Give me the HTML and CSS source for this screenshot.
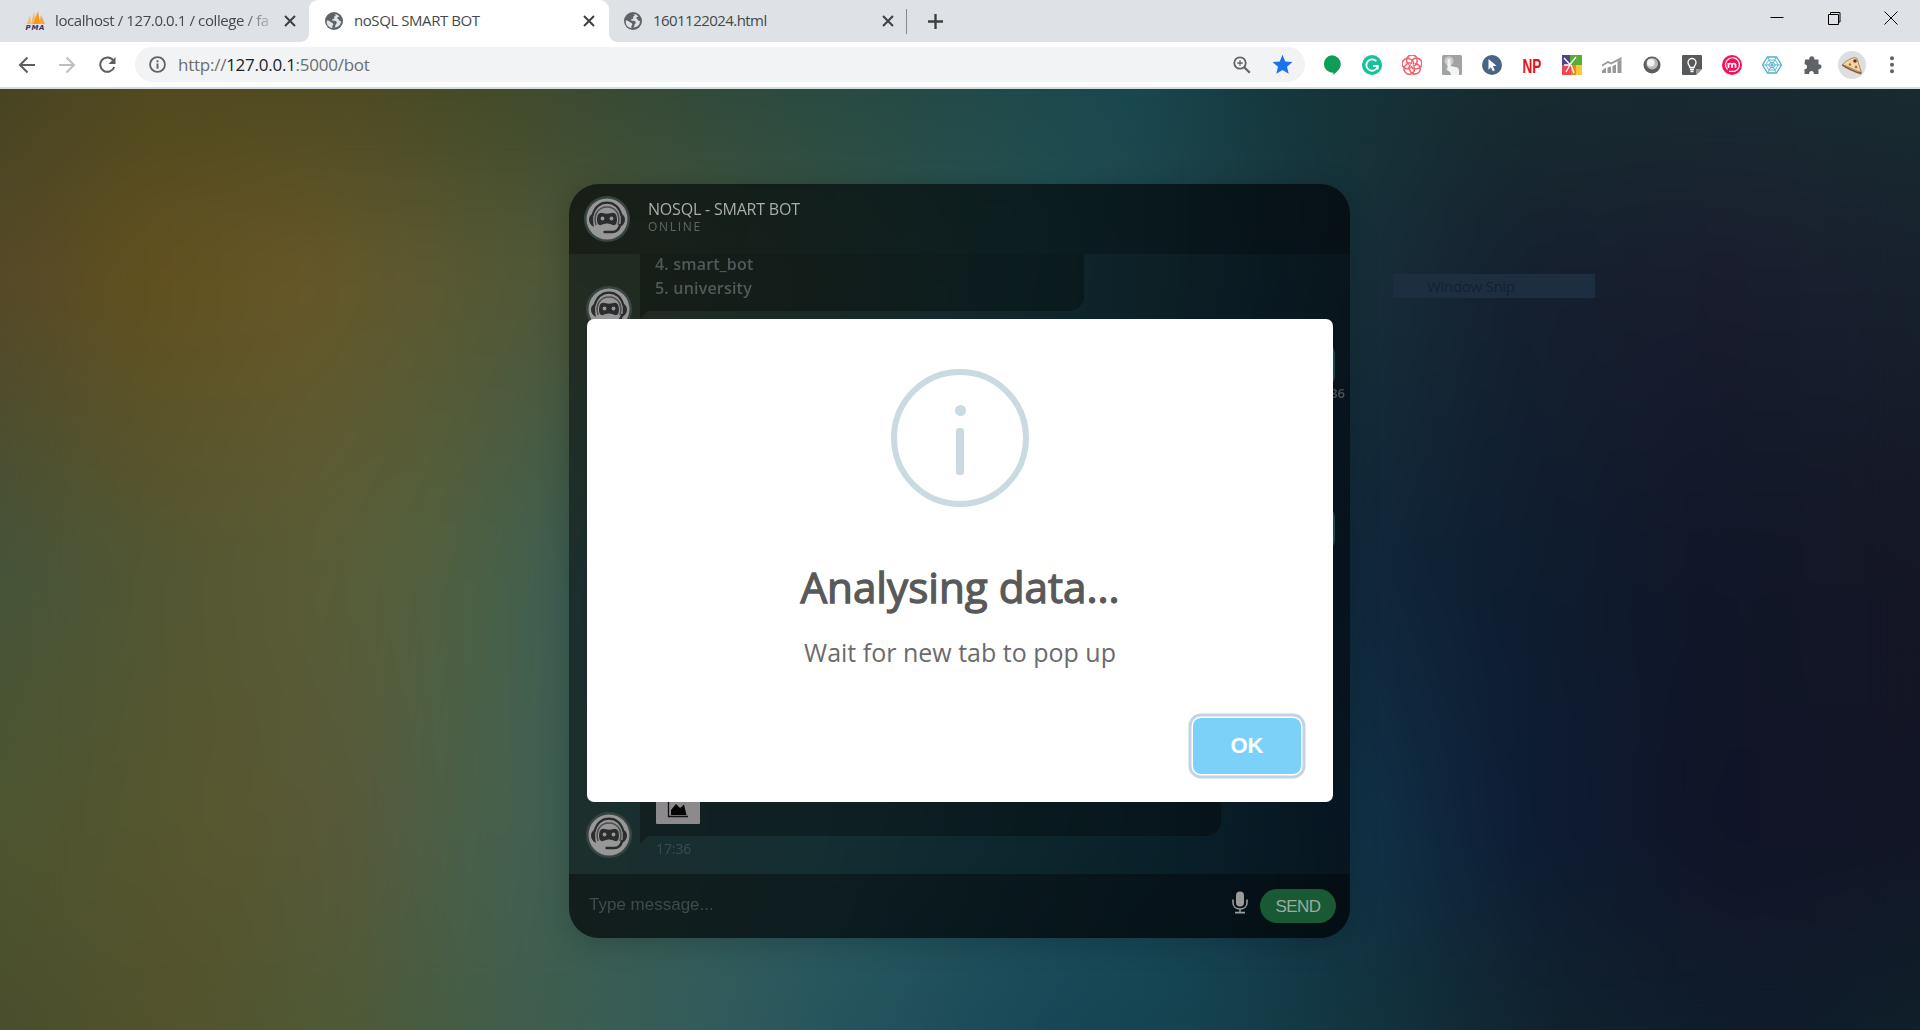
FILE: index.html
```
<!DOCTYPE html>
<html lang="en">
<head>
<meta charset="utf-8">
<title>noSQL SMART BOT</title>
<link rel="stylesheet" href="styles.css">
</head>
<body>
<svg class="defs" aria-hidden="true">
  <symbol id="globe" viewBox="0 0 24 24"><circle cx="12" cy="12" r="12" fill="#5f6368"/><path d="M12 2.2c2 1 2.800 1.500 2.200 2.600-.4.800-1.700.7-1.900 1.700-.2.900.5 1.300 0 2.200-.6 1-2.500.5-2.900 1.500-.3.900 1 1.400 2.500 1.400 2.400 0 3.700.7 3.800 2.400.1 1.500-1.300 1.900-1.700 3.100-.4 1.300-.2 2.600-1.500 3.600a10 10 0 0 0 9.100-8.800c-1.500.5-2.600-.4-3.200-1.700-.6-1.200-2.100-.7-2.100-2.100 0-1.300 1.900-1.500 2.900-2.400A10 10 0 0 0 12 2.200zM2.200 11.500c2.500-.3 3.700.8 5.200 1.700 1.600 1 3.700 1.200 3.700 3 0 1.600-1.500 2-1.400 3.500l.1 1.800A9.900 9.900 0 0 1 2.200 11.500z" fill="#dfe2e7"/></symbol>
  <symbol id="cross" viewBox="0 0 12 12"><path d="M1 1l10 10M11 1L1 11" stroke="#3c4043" stroke-width="2"/></symbol>
  <symbol id="bot" viewBox="0 0 46 46">
    <circle cx="23" cy="23" r="23" fill="#374542"/><circle cx="23" cy="23" r="20.500" fill="#979797"/>
    <path d="M8.500 19.500C11 11 16 6.700 23 6.700S35 11 37.500 19.500" fill="none" stroke="#2b2c2e" stroke-width="2.200"/>
    <path d="M9.500 17.500c-3 1-4.500 3-4.500 6s1.500 6 5 7.500c-1-4-1-9-.5-13.500zM36.500 17.500c3 1 4.500 3 4.500 6s-1.500 6-5 7.500c1-4 1-9 .5-13.500z" fill="#2b2c2e"/>
    <path d="M12 29c-3-10 2-18 11-18s14 8 11 18" fill="none" stroke="#4c4d4e" stroke-width="1.500"/>
    <path d="M15 17.500c2.500-1.600 4.500.2 8 .2s5.500-1.800 8-.2c2.500 1.700 2.700 10 .2 11.300-2.500 1.200-4.200-1.300-8.200-1.300s-5.700 2.500-8.200 1.300c-2.500-1.300-2.300-9.600.2-11.300z" fill="#2b2c2e"/>
    <circle cx="18.500" cy="22.500" r="1.900" fill="#979797"/><circle cx="27.500" cy="22.500" r="1.900" fill="#979797"/>
    <path d="M36 29c-1 5-4 7-8 7h-7.500" fill="none" stroke="#2b2c2e" stroke-width="2.400" stroke-linecap="round"/>
  </symbol>
</svg>

<header class="tabs">
  <div class="tab tab-first">
    <svg class="pma" viewBox="0 0 20 20"><path d="M2 13L5 4l1 9zM6 13L9 1l2 12z" fill="#f5b96a"/><path d="M8 13L13 0l2 13z" fill="#f7981d"/><path d="M14 13l2-9 4 9z" fill="#fba63c"/><text x="10" y="19" text-anchor="middle" textLength="19" class="pma-text">PMA</text></svg>
    <span class="tab-title t1">localhost / 127.0.0.1 / college / fa</span>
    <svg class="x"><use href="#cross"/></svg>
  </div>
  <div class="tab tab-active">
    <svg class="favicon"><use href="#globe"/></svg>
    <span class="tab-title t2">noSQL SMART BOT</span>
    <svg class="x"><use href="#cross"/></svg>
  </div>
  <div class="tab tab-last">
    <svg class="favicon"><use href="#globe"/></svg>
    <span class="tab-title t3">1601122024.html</span>
    <svg class="x"><use href="#cross"/></svg>
  </div>
  <i class="tab-rule"></i>
  <svg class="plus" viewBox="0 0 14 14"><path d="M7 0v14M0 7h14" stroke="#3c4043" stroke-width="2.200"/></svg>
  <div class="winctl">
    <svg viewBox="0 0 14 14"><path d="M.5 6.500h13" stroke="#000"/></svg>
    <svg viewBox="0 0 14 14"><path d="M1.500 3.500h10v10h-10zM3.500 3V1.500h9.500v9.500h-1.500" fill="none" stroke="#000"/></svg>
    <svg viewBox="0 0 14 14"><path d="M.5.500l13 13M13.500.500l-13 13" stroke="#000"/></svg>
  </div>
</header>

<nav class="toolbar">
  <div class="navs">
    <svg viewBox="0 0 18 18"><path d="M17 9H2M9.500 1.500L2 9l7.500 7.500" fill="none" stroke="#5a5d61" stroke-width="2"/></svg>
    <svg viewBox="0 0 18 18"><path d="M1 9h15M8.500 1.500L16 9l-7.500 7.500" fill="none" stroke="#bcbec1" stroke-width="2"/></svg>
    <svg viewBox="0 0 18 18"><path d="M15.300 4.500A7.200 7.200 0 1 0 16.200 11" fill="none" stroke="#5a5d61" stroke-width="2"/><path d="M17.500 1v7h-7z" fill="#5a5d61"/></svg>
  </div>
  <div class="omni">
    <svg class="info" viewBox="0 0 16 16"><circle cx="8" cy="8" r="7" fill="none" stroke="#5f6368" stroke-width="1.700"/><path d="M8 7v5M8 4v1.800" stroke="#5f6368" stroke-width="1.800"/></svg>
    <span class="url">http://<b>127.0.0.1</b>:5000/bot</span>
    <svg class="zoomi" viewBox="0 0 18 18"><circle cx="7" cy="7" r="5.700" fill="none" stroke="#5f6368" stroke-width="1.800"/><path d="M11.200 11.200l5.600 5.600" stroke="#5f6368" stroke-width="2.200"/><path d="M7 4.300v5.400M4.300 7h5.400" stroke="#5f6368" stroke-width="1.300"/></svg>
    <svg class="star" viewBox="0 0 20 20"><path d="M10 .8l2.600 6.300 6.900.6-5.200 4.500 1.600 6.700L10 15.300l-5.900 3.600 1.600-6.700L.5 7.700l6.900-.6z" fill="#1a73e8"/></svg>
  </div>
  <div class="exts">
    <svg viewBox="0 0 20 20"><path d="M10 .3a8.800 8.800 0 0 1 8.800 8.800c0 4.200-3.300 7.700-7.300 10.700l-.3-2.100A8.700 8.700 0 1 1 10 .3z" fill="#0f9d58"/></svg>
    <svg viewBox="0 0 20 20"><circle cx="10" cy="10" r="10" fill="#15c39a"/><path d="M14.300 6.200A5.700 5.700 0 1 0 15.600 11.500M11 11h4.700v3.500" fill="none" stroke="#fff" stroke-width="1.800"/></svg>
    <svg viewBox="0 0 20 20" fill="none" stroke="#f4606c" stroke-width="1.500"><g id="petal"><path d="M7 9.500A5.200 5.200 0 1 1 15 6.300c0 2.800-1.800 4.600-4.200 5"/></g><use href="#petal" transform="rotate(72 10 10)"/><use href="#petal" transform="rotate(144 10 10)"/><use href="#petal" transform="rotate(216 10 10)"/><use href="#petal" transform="rotate(288 10 10)"/></svg>
    <svg viewBox="0 0 20 20"><rect width="20" height="20" rx="1.500" fill="#a0a2a3"/><circle cx="7" cy="6" r="4.500" fill="#c9cbcc"/><path d="M5.500 5.500c0-2 3-2 3 0V11l6 1.200c2 .5 2.500 2 2.500 4V20H9c0-3-3-4-5.500-6.500l2 .2z" fill="#f3f4f4"/></svg>
    <svg viewBox="0 0 20 20"><circle cx="10" cy="10" r="10" fill="#4a6484"/><path d="M6.500 4l8 6.800-3.700.4 2 4-2 1-1.900-4-2.400 2.500z" fill="#fff"/></svg>
    <svg class="np-icon" viewBox="0 0 24 28"><text x="12" y="21.500" text-anchor="middle" textLength="19" lengthAdjust="spacingAndGlyphs" class="np">NP</text></svg>
    <svg viewBox="0 0 20 20"><path d="M0 0h8v10H0z" fill="#4f4493"/><path d="M8 0h12v10H8z" fill="#58ad36"/><path d="M0 10h9v10H0z" fill="#ea4a4f"/><path d="M9 10h5v10H9z" fill="#f0851b"/><path d="M14 10h6v10h-6z" fill="#fcc63a"/><path d="M2 3l6 6.500L14 2M2 10h6l-4 7M9 10l3 8" fill="none" stroke="#fff" stroke-width="1.300"/></svg>
    <svg viewBox="0 0 20 20" fill="#97999b"><path d="M0 15.500l4-3V18H0zM5.500 12.500l3.500-1V18H5.500zM10.500 11l3.500-1.500V18h-3.500zM15.500 6.500l4-2V18h-4zM0 9.500L6 6l3 1.500L19.500 2v2.200L9 9.500 6 8 0 11.500z"/></svg>
    <svg viewBox="0 0 20 20"><circle cx="10" cy="10" r="8.500" fill="#5b5d5f"/><circle cx="10.200" cy="8.700" r="5.800" fill="#b9bbbc"/><circle cx="8.800" cy="7.800" r="3.800" fill="#f2f3f3"/></svg>
    <svg viewBox="0 0 20 20"><path d="M1 0h18a1 1 0 0 1 1 1v13l-6 6H1a1 1 0 0 1-1-1V1a1 1 0 0 1 1-1z" fill="#57595b"/><path d="M20 14l-6 6v-6z" fill="#999"/><path d="M8 12.500c0-1.500-2-2.500-2-5a4 4 0 0 1 8 0c0 2.500-2 3.500-2 5zM8 14.500h4M8.500 16.500h3" fill="none" stroke="#fff" stroke-width="1.300"/></svg>
    <svg viewBox="0 0 20 20"><circle cx="10" cy="10" r="10" fill="#f5125b"/><path d="M5.500 14.700A7 7 0 1 1 13 16.300H7" fill="none" stroke="#fff" stroke-width="1.200"/><path d="M6.500 13V8m0 2c0-2 3.500-2 3.500 0v3m0-3c0-2 3.500-2 3.500 0v3" fill="none" stroke="#fff" stroke-width="1.700"/></svg>
    <svg viewBox="0 0 20 20" fill="none" stroke="#4fb0c8"><path d="M5.500 2h9l5 8-5 8h-9l-5-8z" stroke-width="1.300"/><path d="M7 5h6l3.300 5L13 15H7l-3.300-5zM8.300 7.500h3.400l1.600 2.500-1.600 2.500H8.300L6.700 10zM.5 10h19M5.500 2l9 16M14.500 2l-9 16" stroke-width=".9"/></svg>
    <svg viewBox="0 0 20 20"><path d="M3 4.500h4.300a2.600 2.600 0 1 1 5 0h4.200v4.700a2.500 2.500 0 1 1 0 4.900V19h-4.700a2.400 2.400 0 1 0-4.600 0H2.500v-4.700a2.500 2.500 0 1 0 0-5z" fill="#5f6368"/></svg>
    <svg class="avatar" viewBox="0 0 28 28"><circle cx="14" cy="14" r="14" fill="#dddee0"/><path d="M4.500 13.500C8 10 12 7.500 16.500 6.500l2.500 1 4.500 14.300z" fill="#f0d5a0" stroke="#7a5230" stroke-width=".6"/><path d="M4.500 13.500c5 3 12 6.500 19 8.300l-.4 1.800C15 21 8 17.500 4 14.800z" fill="#8b5a32"/><circle cx="17" cy="10" r="1.800" fill="#6a3325"/><circle cx="12" cy="13.500" r="1.300" fill="#b46648"/><circle cx="18" cy="16" r="1.300" fill="#b46648"/></svg>
    <svg viewBox="0 0 20 20" fill="#5f6368"><circle cx="10" cy="3.200" r="2"/><circle cx="10" cy="9.800" r="2"/><circle cx="10" cy="16.300" r="2"/></svg>
  </div>
</nav>

<main class="page">
  <div class="mesh m1"></div><div class="mesh m2"></div><div class="mesh m3"></div><div class="mesh m4"></div><div class="mesh m5"></div>
  <div class="haze"></div>

  <section class="chat">
    <div class="chat-head">
      <svg class="bot"><use href="#bot"/></svg>
      <div><div class="chat-name">NOSQL - SMART BOT</div><div class="chat-status">ONLINE</div></div>
    </div>
    <div class="chat-body">
      <div class="msg msg-top">
        <svg class="bot"><use href="#bot"/></svg>
        <div class="bubble b1"><div class="lines">4. smart_bot<br>5. university</div></div>
      </div>
      <div class="mine"></div>
      <div class="mine-time">17:36</div>
      <div class="mine mine-2"></div>
      <div class="msg msg-last">
        <svg class="bot"><use href="#bot"/></svg>
        <div>
          <div class="bubble b2">
            <svg class="chart" viewBox="0 0 44 44"><rect width="44" height="44" rx="1" fill="#8c8a8c"/><path d="M12.500 12v24.500H32" fill="none" stroke="#111" stroke-width="1.300"/><path d="M15 35V30l5-6 4 4 2-1.500 2-2 2.500 10.500z" fill="#050505"/></svg>
          </div>
          <div class="time">17:36</div>
        </div>
      </div>
    </div>
    <div class="chat-foot">
      <span class="placeholder">Type message...</span>
      <svg class="mic" viewBox="0 0 16 22"><rect x="4" y="0" width="8" height="15" rx="4" fill="#9b9b9b"/><path d="M1 8v3c0 4 3 6.500 7 6.500s7-2.500 7-6.500V8M8 17.500V21M3 21.100h10" fill="none" stroke="#9b9b9b" stroke-width="1.600"/></svg>
      <span class="send">SEND</span>
    </div>
  </section>

  <div class="snip">Window Snip</div>

  <div class="overlay">
    <section class="modal">
      <div class="modal-icon"></div>
      <h1>Analysing data...</h1>
      <p>Wait for new tab to pop up</p>
      <button class="ok">OK</button>
    </section>
  </div>
</main>
</body>
</html>
```
FILE: styles.css
```
* { box-sizing: border-box; }
body { margin: 0; width: 1920px; height: 1030px; overflow: hidden; display: flex; flex-direction: column; font-family: "Open Sans", "Noto Sans", sans-serif; background: #fff; }
svg { display: block; flex: none; }
.defs { position: absolute; width: 0; height: 0; }

/* tab strip */
.tabs { height: 42px; background: #dee1e6; display: flex; align-items: center; flex: none; }
.tab { height: 42px; display: flex; align-items: center; }
.tab-first { width: 309px; padding: 0 13px 0 25px; }
.tab-active { position: relative; width: 300px; padding: 0 14px 0 16px; background: #fff; border-radius: 9px 9px 0 0; }
.tab-active::before, .tab-active::after { content: ""; position: absolute; bottom: 0; width: 8px; height: 8px; }
.tab-active::before { right: 100%; background: radial-gradient(circle at 0 0, #0000 7.500px, #fff 8px); }
.tab-active::after { left: 100%; background: radial-gradient(circle at 100% 0, #0000 7.500px, #fff 8px); }
.tab-last { width: 297px; padding: 0 12px 0 15px; }
.favicon { width: 18px; height: 18px; }
.pma { width: 20px; height: 20px; }
.pma-text { font: italic bold 7px "DejaVu Sans", sans-serif; fill: #3b3468; }
.x { width: 12px; height: 12px; }
.tab-title { flex: 1; font-size: 15px; line-height: 20px; margin-top: -2px; color: #45494d; white-space: nowrap; overflow: hidden; }
.tab-title.t1 { margin: -2px 7px 0 10px; letter-spacing: -.4px; -webkit-mask: linear-gradient(90deg, #000 84%, transparent 101%); mask: linear-gradient(90deg, #000 84%, transparent 101%); }
.t2 { margin-left: 11px; letter-spacing: -.43px; }
.t3 { margin-left: 11px; letter-spacing: -.55px; }
.tab-rule { width: 1px; height: 25px; background: #85888c; }
.plus { width: 15px; height: 15px; margin-left: 21px; }
.winctl { margin-left: auto; display: flex; gap: 43px; padding: 0 22px 6px 0; }
.winctl svg { width: 14px; height: 14px; }

/* toolbar */
.toolbar { height: 47px; display: flex; align-items: center; background: #fff; border-bottom: 2px solid #d3dedf; flex: none; }
.navs { display: flex; gap: 22px; padding-left: 18px; width: 135px; }
.navs svg { width: 18px; height: 18px; }
.omni { width: 1170px; height: 35px; background: #f1f3f4; border-radius: 18px; display: flex; align-items: center; padding: 0 12px 0 14px; }
.info { width: 17px; height: 17px; }
.url { flex: 1; margin-left: 12px; font-size: 17px; line-height: 24px; letter-spacing: -.25px; color: #6b6e72; }
.url b { font-weight: 400; color: #202124; }
.zoomi { width: 18px; height: 18px; margin-right: 21px; }
.star { width: 21px; height: 21px; }
.exts { display: flex; align-items: center; padding-left: 7px; }
.exts svg { width: 20px; height: 20px; margin: 0 10px; }
.exts .avatar { width: 28px; height: 28px; margin: 0 6px; }
.exts .np-icon { width: 24px; height: 28px; margin: 0 8px; }
.np { font: bold 21px "Liberation Sans", sans-serif; fill: #e1141c; }

/* page backdrop: horizontal colour bands faded into one another, then softened */
.page { position: relative; flex: 1; overflow: hidden; padding: 95px 0 0 569px; }
.mesh, .haze { position: absolute; inset: 0; }
.haze { -webkit-backdrop-filter: blur(28px); backdrop-filter: blur(28px); }
.m1 { background: linear-gradient(90deg, #474423 0, #524a20 8%, #4f4b23 18%, #434b2a 26%, #364a37 34%, #2b4b40 41%, #214a4a 52%, #1a4850 59%, #15383d 67%, #182c30 79%, #1a2b33 91%, #192d30 100%); }
.m2 { background: linear-gradient(90deg, #554929 0, #61501f 7%, #665728 16%, #5c5931 22%, #4b573a 30%, #3d5441 40%, #235357 54%, #17303a 70%, #15202f 79%, #191d2e 90%, #18212e 100%); -webkit-mask: linear-gradient(#0000 0, #000 180px); mask: linear-gradient(#0000 0, #000 180px); }
.m3 { background: linear-gradient(90deg, #45543a 0, #545733 9%, #595d37 17%, #50603f 23%, #42604f 28%, #34595a 33%, #2a555c 45%, #1a4a56 58%, #10263a 71%, #0f1f32 77%, #101729 88%, #151725 100%); -webkit-mask: linear-gradient(#0000 200px, #000 480px); mask: linear-gradient(#0000 200px, #000 480px); }
.m4 { background: linear-gradient(90deg, #4d5530 0, #58572f 11%, #58593a 18%, #4a6049 24%, #3d5f55 30%, #2a5c62 45%, #1a4c5a 60%, #113147 71%, #0d1d35 79%, #101428 89%, #131626 100%); -webkit-mask: linear-gradient(#0000 480px, #000 740px); mask: linear-gradient(#0000 480px, #000 740px); }
.m5 { background: linear-gradient(90deg, #4a4e2d 0, #53532d 9%, #4f5a37 18%, #425e4b 26%, #345c5a 36%, #27555e 43%, #184656 55%, #15434f 62%, #13343f 71%, #11222e 81%, #101b2b 92%, #10202a 100%); -webkit-mask: linear-gradient(#0000 740px, #000 930px); mask: linear-gradient(#0000 740px, #000 930px); }

/* chat window */
.chat { position: relative; width: 781px; height: 754px; display: flex; flex-direction: column; border-radius: 30px; overflow: hidden; background: rgba(0, 5, 12, .53); box-shadow: 0 5px 30px rgba(0, 0, 0, .2); }
.chat::before { content: ""; position: absolute; inset: 0; background: linear-gradient(100deg, transparent 40%, rgba(2, 6, 12, .25) 100%); }
.chat > * { position: relative; }
.bot { width: 46px; height: 46px; }
.chat-head { height: 70px; flex: none; background: rgba(0, 0, 0, .24); display: flex; padding: 12px 15px; gap: 18px; }
.chat-name { font-size: 16px; line-height: 20px; margin-top: 3px; letter-spacing: -.2px; color: #a9adac; white-space: nowrap; }
.chat-status { font-size: 12px; line-height: 16px; letter-spacing: 1.700px; color: #5d6967; }
.chat-body { height: 620px; flex: none; overflow: hidden; padding-left: 17px; }
.msg { display: flex; gap: 8px; }
.msg .bot { align-self: flex-end; }
.msg-top { height: 78px; }
.bubble { position: relative; background: rgba(0, 0, 0, .3); border-radius: 0 15px 15px 0; color: #4f5b5a; font-weight: 600; font-size: 16px; line-height: 24px; padding-left: 16px; }
.bubble::after { content: ""; position: absolute; left: 0; top: 100%; border-top: 8px solid rgba(0, 0, 0, .3); border-right: 8px solid transparent; }
.b1 { width: 444px; height: 57px; border-top-right-radius: 0; letter-spacing: .2px; }
.lines { margin: -2px 0 0 -1px; }
.mine { margin: 11px 15px 0 400px; height: 43px; border-radius: 10px; background: #1b4a4c; }
.mine-time { margin: -3px 5px 0 0; text-align: right; font-size: 13px; line-height: 20px; font-weight: 600; color: #4a5057; }
.mine-2 { margin-top: 104px; }
.msg-last { margin-top: 52px; height: 256px; }
.b2 { width: 581px; height: 234px; padding: 178px 0 0 16px; }
.chart { width: 44px; height: 44px; }
.time { margin: 3px 0 0 16px; font-size: 14px; line-height: 20px; letter-spacing: -.1px; color: #3a4d50; }
.chat-foot { height: 64px; flex: none; background: rgba(0, 0, 0, .34); display: flex; align-items: center; padding: 0 14px 0 20px; }
.placeholder { flex: 1; font: 17px "Liberation Sans", sans-serif; color: #414a49; margin-top: -3px; }
.mic { width: 16px; height: 23px; margin: -7px 12px 0 0; }
.send { width: 76px; height: 34px; border-radius: 17px; background: #195933; color: #9caaa2; font: 17px/35px "Liberation Sans", sans-serif; text-align: center; letter-spacing: -.6px; }

.snip { position: absolute; left: 1393px; top: 185px; width: 202px; height: 24px; background: #1e2e41; color: #122031; font-size: 15px; line-height: 25px; letter-spacing: -.3px; padding-left: 34px; }

/* dialog */
.overlay { position: absolute; inset: 0; display: flex; justify-content: center; align-items: flex-start; padding: 230px 0 0 0; }
.modal { width: 746px; height: 483px; background: #fff; border-radius: 7px; display: flex; flex-direction: column; align-items: center; padding-top: 50px; }
.modal-icon { width: 138px; height: 138px; border: 6px solid #c9dae1; border-radius: 50%; display: flex; flex-direction: column; align-items: center; padding-top: 30px; }
.modal-icon::before { content: ""; width: 11px; height: 11px; border-radius: 50%; background: #c9dae1; }
.modal-icon::after { content: ""; width: 8px; height: 47px; margin-top: 12px; border-radius: 3px; background: #c9dae1; }
h1 { margin: 50px 0 0; font-size: 42.200px; line-height: 60px; font-weight: 400; -webkit-text-stroke: 1.300px #595959; color: #595959; white-space: nowrap; }
p { margin: 16px 0 0; font-size: 25px; line-height: 38px; color: #6b6b6b; }
.ok { align-self: flex-end; margin: 47px 32px 0 0; width: 108px; height: 56px; padding: 0; border: 0; border-radius: 8px; background: #7cd1f9; box-shadow: 0 0 0 1.500px #fff, 0 0 0 4.500px #c2d4e3; color: #fff; font: bold 22px "Liberation Sans", sans-serif; }
```
